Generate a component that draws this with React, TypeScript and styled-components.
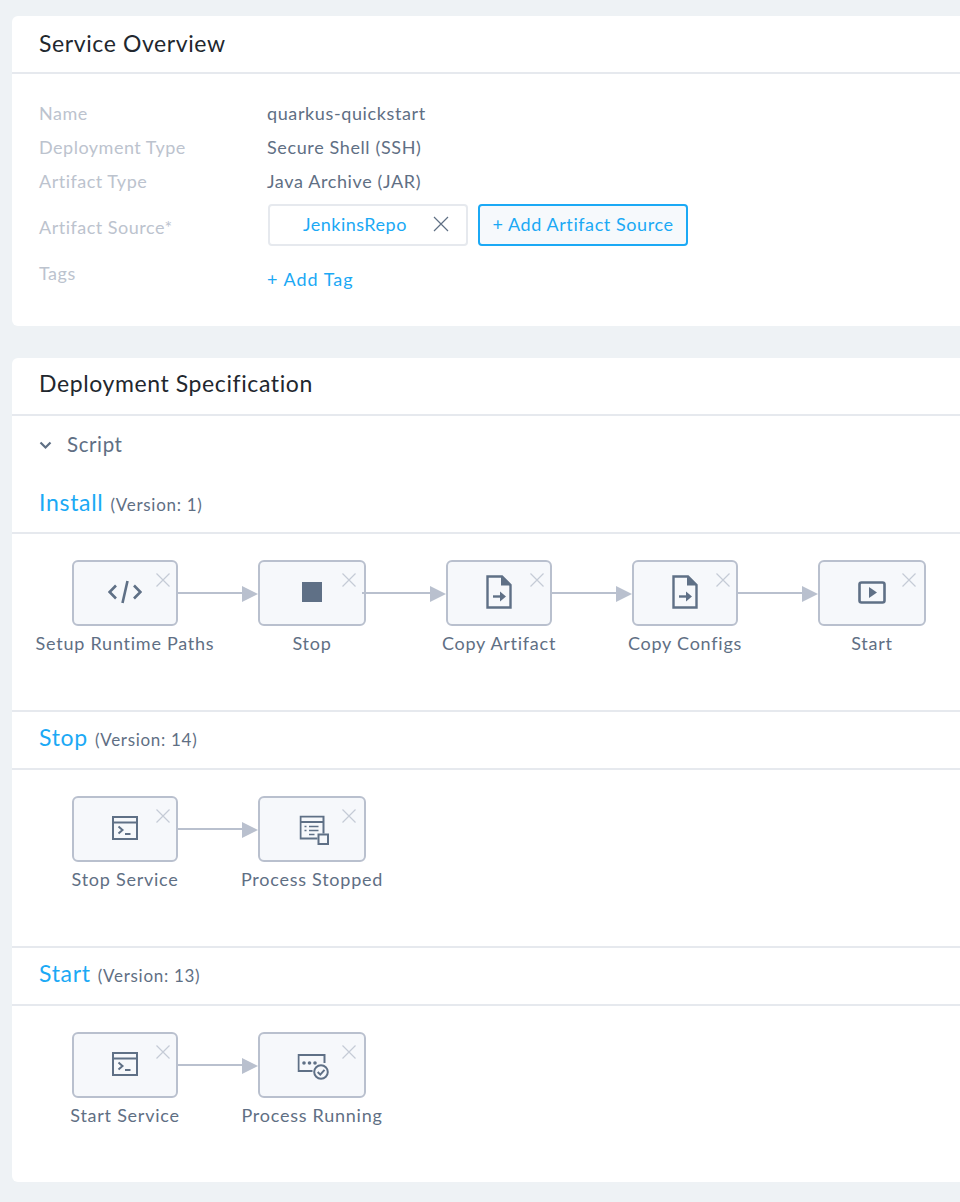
import React from "react";
import styled, { createGlobalStyle } from "styled-components";

const GlobalStyle = createGlobalStyle`
  html, body {
    margin: 0;
    padding: 0;
    background: #eef2f5;
    font-family: "Lato", "Open Sans", sans-serif;
    overflow: hidden;
  }
`;

const Page = styled.div`
  height: 1202px;
  padding: 16px 0 0 12px;
  box-sizing: border-box;
  display: flex;
  flex-direction: column;
  gap: 32px;
`;

const Card = styled.section`
  background: #fff;
  border-radius: 6px 0 0 6px;
`;

const CardTitle = styled.h2<{ $lift: number }>`
  margin: 0;
  height: 58px;
  padding: 0 27px ${(p) => p.$lift}px;
  box-sizing: border-box;
  display: flex;
  align-items: center;
  font-size: 23px;
  font-weight: 400;
  letter-spacing: 0.6px;
  color: #22272e;
  border-bottom: 2px solid #e6e9ee;
`;

const Overview = styled.div`
  height: 252px;
  padding: 22px 27px 0;
  box-sizing: border-box;
`;

const InfoRow = styled.div`
  display: flex;
  align-items: center;
  height: 34px;
`;

const Label = styled.div`
  width: 228px;
  flex: none;
  font-size: 18px;
  letter-spacing: 0.5px;
  color: #bcc3ce;
`;

const Value = styled.div`
  font-size: 18px;
  letter-spacing: 0.62px;
  color: #5f6f84;
`;

const SourceRow = styled.div`
  display: flex;
  height: 42px;
  margin-top: 6px;
`;

const SourceLabel = styled(Label)`
  padding-top: 12px;
`;

const SourceChip = styled.div`
  width: 200px;
  margin-left: 1px;
  box-sizing: border-box;
  border: 2px solid #e6e9ee;
  border-radius: 4px;
  display: flex;
  align-items: center;
  justify-content: space-between;
  padding: 0 17px 3px 33px;
  font-size: 18px;
  letter-spacing: 0.5px;
  color: #1ba9f5;
`;

const AddSource = styled.button`
  width: 210px;
  margin-left: 10px;
  padding: 0 0 3px;
  border: 2px solid #1ba9f5;
  border-radius: 4px;
  background: #f6f9fc;
  color: #1ba9f5;
  font-family: inherit;
  font-size: 18px;
  letter-spacing: 0.58px;
`;

const TagsRow = styled.div`
  display: flex;
  margin-top: 16px;
`;

const AddTag = styled.a`
  font-size: 18px;
  letter-spacing: 1px;
  color: #1ba9f5;
  margin-top: 6px;
`;

const ScriptToggle = styled.div`
  height: 58px;
  padding: 0 27px 2px;
  display: flex;
  align-items: center;
  gap: 15px;
  box-sizing: border-box;
  font-size: 20.5px;
  letter-spacing: 0.6px;
  color: #5f6f84;
`;

const SectionHead = styled.div<{ $first?: boolean }>`
  height: ${(p) => (p.$first ? 60 : 58)}px;
  padding: 0 27px ${(p) => (p.$first ? 2 : 6)}px;
  box-sizing: border-box;
  display: flex;
  align-items: center;
  gap: 7px;
  border-bottom: 2px solid #e6e9ee;
`;

const SectionName = styled.span`
  font-size: 23px;
  letter-spacing: 0.7px;
  color: #1ba9f5;
`;

const SectionVersion = styled.span`
  font-size: 17px;
  letter-spacing: 0.7px;
  color: #5f6f84;
  padding-top: 4px;
`;

const Flow = styled.div<{ $last?: boolean }>`
  height: ${(p) => (p.$last ? 176 : 178)}px;
  padding: 26px 0 0 60px;
  box-sizing: border-box;
  display: flex;
  align-items: flex-start;
  border-bottom: ${(p) => (p.$last ? "none" : "2px solid #e6e9ee")};
`;

const Step = styled.div<{ $width: number }>`
  width: ${(p) => p.$width}px;
  flex: none;
  display: flex;
  flex-direction: column;
  align-items: center;
`;

const Box = styled.div`
  position: relative;
  width: 100%;
  height: 66px;
  box-sizing: border-box;
  background: #f6f8fb;
  border: 2px solid #b9c0ce;
  border-radius: 6px;
  display: flex;
  align-items: center;
  justify-content: center;
  padding-bottom: 2px;
  color: #5f7086;
`;

const IconSlot = styled.div<{ $x?: number; $y?: number }>`
  display: flex;
  transform: translate(${(p) => p.$x ?? 0}px, ${(p) => p.$y ?? 0}px);
`;

const Remove = styled.svg`
  position: absolute;
  top: 11px;
  left: 82px;
  width: 14px;
  height: 14px;
`;

const StepName = styled.div`
  margin-top: 7px;
  font-size: 18px;
  line-height: 20px;
  letter-spacing: 0.75px;
  color: #5f6f84;
  white-space: nowrap;
`;

const Connector = styled.div<{ $width: number; $overlap?: boolean }>`
  position: relative;
  z-index: 1;
  flex: none;
  width: ${(p) => p.$width}px;
  margin-left: ${(p) => (p.$overlap ? -4 : 0)}px;
  height: 66px;
  display: flex;
  align-items: center;
`;

const Line = styled.div`
  flex: 1;
  height: 2px;
  background: #b9c0ce;
`;

const Head = styled.div`
  width: 0;
  height: 0;
  border-left: 16px solid #b9c0ce;
  border-top: 8px solid transparent;
  border-bottom: 8px solid transparent;
  margin-top: 1px;
`;

const Chevron = styled.svg`
  width: 13px;
  height: 9px;
  margin-top: 3px;
`;

type IconName = "code" | "stop" | "file" | "play" | "terminal" | "process" | "running";

const Icon = ({ name }: { name: IconName }) => {
  switch (name) {
    case "code":
      return (
        <svg width="36" height="26" viewBox="0 0 36 26" fill="none" stroke="currentColor" strokeWidth="2.6">
          <path d="M9 6.5 2.6 13 9 19.5M27 6.5 33.4 13 27 19.5M20.5 2 15.5 24" />
        </svg>
      );
    case "stop":
      return (
        <svg width="20" height="20" viewBox="0 0 20 20">
          <rect width="20" height="20" fill="currentColor" />
        </svg>
      );
    case "file":
      return (
        <svg width="26" height="34" viewBox="0 0 26 34" fill="none">
          <path d="M1.5 1.5H16L24.5 10V32.5H1.5Z" stroke="currentColor" strokeWidth="2.4" />
          <path d="M15 1.5 24.5 10.5H15Z" fill="currentColor" />
          <path d="M7 21.5H16" stroke="currentColor" strokeWidth="2.4" />
          <path d="M14 16.5 20 21.5 14 26.5Z" fill="currentColor" />
        </svg>
      );
    case "play":
      return (
        <svg width="28" height="23" viewBox="0 0 28 23" fill="none">
          <rect x="1.5" y="1.5" width="25" height="20" rx="2" stroke="currentColor" strokeWidth="2.6" />
          <path d="M11 6 19 11.5 11 17Z" fill="currentColor" />
        </svg>
      );
    case "terminal":
      return (
        <svg width="26" height="24" viewBox="0 0 26 24" fill="none" stroke="currentColor">
          <rect x="1" y="1" width="24" height="22" strokeWidth="2" />
          <path d="M1 6.5H25" strokeWidth="2" />
          <path d="M6.5 10.5 10.5 14 6.5 17.5" strokeWidth="2" />
          <path d="M13 18H18.5" strokeWidth="2" />
        </svg>
      );
    case "process":
      return (
        <svg width="30" height="30" viewBox="0 0 30 30" fill="none" stroke="currentColor">
          <path d="M18 23H1V1H24V18" strokeWidth="2" />
          <path d="M1 6.5H24" strokeWidth="2" />
          <path d="M5 11H7M9.5 11H19M5 15H7M9.5 15H19M9.5 19H15" strokeWidth="1.6" />
          <rect x="19" y="19" width="9.5" height="9.5" strokeWidth="2" />
        </svg>
      );
    case "running":
      return (
        <svg width="32" height="26" viewBox="0 0 32 26" fill="none" stroke="currentColor">
          <path d="M15 17H1V1H27V9" strokeWidth="2" />
          <circle cx="6.5" cy="9" r="1.8" fill="currentColor" stroke="none" />
          <circle cx="12" cy="9" r="1.8" fill="currentColor" stroke="none" />
          <circle cx="17.5" cy="9" r="1.8" fill="currentColor" stroke="none" />
          <circle cx="23.5" cy="18" r="6.8" fill="#f6f8fb" strokeWidth="2" />
          <path d="M20.2 18 22.8 20.6 27 15.8" strokeWidth="2" />
        </svg>
      );
  }
};

type StepData = { name: string; icon: IconName; width: number; x?: number; y?: number };

type Section = { name: string; version: number; steps: StepData[] };

const sections: Section[] = [
  {
    name: "Install",
    version: 1,
    steps: [
      { name: "Setup Runtime Paths", icon: "code", width: 106 },
      { name: "Stop", icon: "stop", width: 108 },
      { name: "Copy Artifact", icon: "file", width: 106 },
      { name: "Copy Configs", icon: "file", width: 106 },
      { name: "Start", icon: "play", width: 108 },
    ],
  },
  {
    name: "Stop",
    version: 14,
    steps: [
      { name: "Stop Service", icon: "terminal", width: 106 },
      { name: "Process Stopped", icon: "process", width: 108, x: 2.5, y: 2.5 },
    ],
  },
  {
    name: "Start",
    version: 13,
    steps: [
      { name: "Start Service", icon: "terminal", width: 106 },
      { name: "Process Running", icon: "running", width: 108, x: 1.5, y: 3 },
    ],
  },
];

const Cross = () => (
  <Remove viewBox="0 0 14 14" fill="none" stroke="#c5cbd6" strokeWidth="1.2">
    <path d="M0.5 0.5 13.5 13.5M13.5 0.5 0.5 13.5" />
  </Remove>
);

const App = () => {
  return (
    <Page>
      <GlobalStyle />
      <Card>
        <CardTitle $lift={2}>Service Overview</CardTitle>
        <Overview>
          <InfoRow>
            <Label>Name</Label>
            <Value>quarkus-quickstart</Value>
          </InfoRow>
          <InfoRow>
            <Label>Deployment Type</Label>
            <Value>Secure Shell (SSH)</Value>
          </InfoRow>
          <InfoRow>
            <Label>Artifact Type</Label>
            <Value>Java Archive (JAR)</Value>
          </InfoRow>
          <SourceRow>
            <SourceLabel>Artifact Source*</SourceLabel>
            <SourceChip>
              JenkinsRepo
              <svg width="16" height="16" viewBox="0 0 16 16" fill="none" stroke="#5f6f84" strokeWidth="1.2">
                <path d="M1 1 15 15M15 1 1 15" />
              </svg>
            </SourceChip>
            <AddSource>+ Add Artifact Source</AddSource>
          </SourceRow>
          <TagsRow>
            <Label>Tags</Label>
            <AddTag>+ Add Tag</AddTag>
          </TagsRow>
        </Overview>
      </Card>
      <Card>
        <CardTitle $lift={6}>Deployment Specification</CardTitle>
        <ScriptToggle>
          <Chevron viewBox="0 0 13 9" fill="none" stroke="#5f6f84" strokeWidth="2.2">
            <path d="M1.5 1.5 6.5 6.5 11.5 1.5" />
          </Chevron>
          Script
        </ScriptToggle>
        {sections.map((section, s) => (
          <React.Fragment key={section.name}>
            <SectionHead $first={s === 0}>
              <SectionName>{section.name}</SectionName>
              <SectionVersion>(Version: {section.version})</SectionVersion>
            </SectionHead>
            <Flow $last={s === sections.length - 1}>
              {section.steps.map((step, i) => (
                <React.Fragment key={step.name}>
                  {i > 0 && (
                    <Connector $width={step.name === "Copy Artifact" ? 84 : 80} $overlap={step.name === "Copy Artifact"}>
                      <Line />
                      <Head />
                    </Connector>
                  )}
                  <Step $width={step.width}>
                    <Box>
                      <IconSlot $x={step.x} $y={step.y}>
                        <Icon name={step.icon} />
                      </IconSlot>
                      <Cross />
                    </Box>
                    <StepName>{step.name}</StepName>
                  </Step>
                </React.Fragment>
              ))}
            </Flow>
          </React.Fragment>
        ))}
      </Card>
    </Page>
  );
};

export default App;
